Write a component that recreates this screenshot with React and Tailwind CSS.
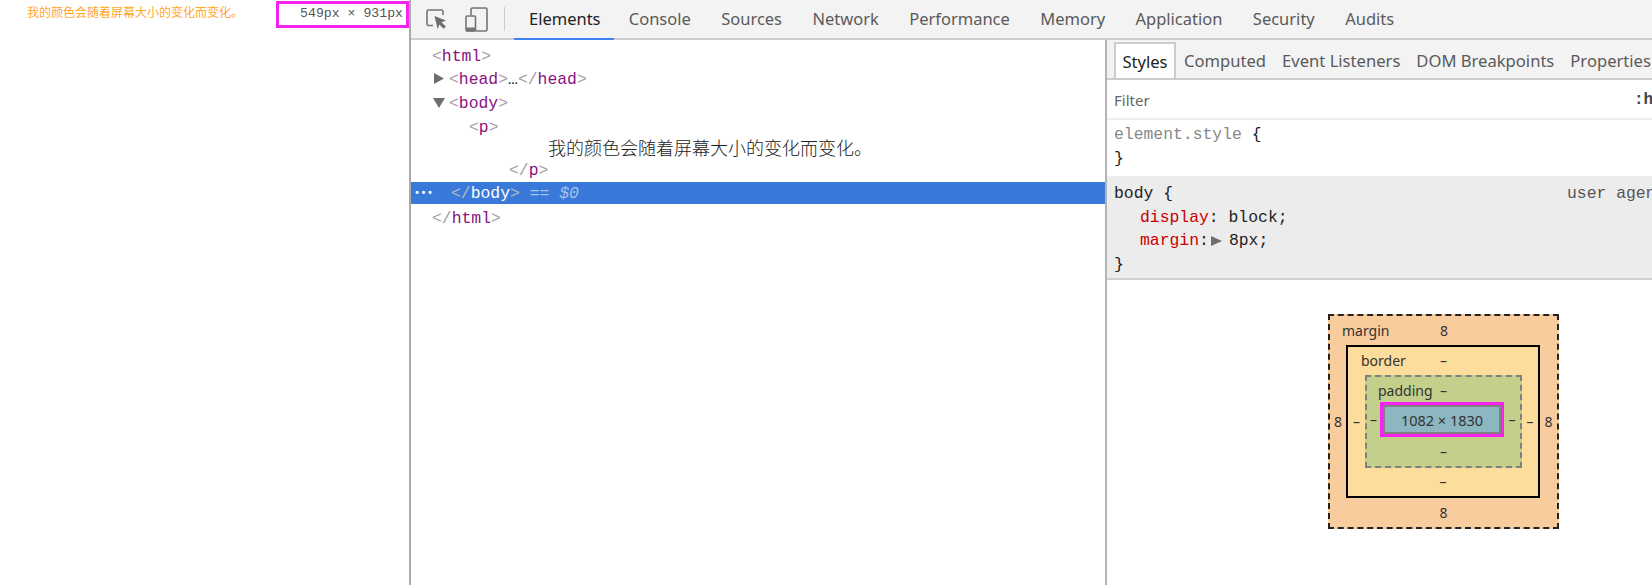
import React from 'react';

const uiFont = "font-['Noto_Sans','Open_Sans',sans-serif]";
const tabs = ['Console', 'Sources', 'Network', 'Performance', 'Memory', 'Application', 'Security', 'Audits'];
const subTabs = ['Computed', 'Event Listeners', 'DOM Breakpoints', 'Properties'];

const Tag = ({ children }) => (
  <>
    <span className="text-[#a89ba8]">&lt;</span>
    <span className="text-[#881280]">{children}</span>
    <span className="text-[#a89ba8]">&gt;</span>
  </>
);

const CloseTag = ({ children }) => (
  <>
    <span className="text-[#a89ba8]">&lt;/</span>
    <span className="text-[#881280]">{children}</span>
    <span className="text-[#a89ba8]">&gt;</span>
  </>
);

const Arrow = ({ down }) => (
  <svg width="12" height="12" viewBox="0 0 12 12" className="shrink-0 mr-[4px] -ml-[1px] -mt-[1px]">
    <path d={down ? 'M0 1h12L6 11z' : 'M1 0l10 5.5L1 11z'} fill="#6e6e6e" />
  </svg>
);

const BoxLabel = ({ children, className = '' }) => (
  <span className={`text-[14px] leading-[18px] text-[#333] ${className}`}>{children}</span>
);

const App = () => {
  return (
    <div className="flex w-[1652px] h-[585px] overflow-hidden bg-white font-['Liberation_Mono',monospace]">
      {/* page preview */}
      <div className="w-[409px] shrink-0 flex justify-between items-start pt-[1px]">
        <p className="pl-[27px] pt-[2px] text-[12px] leading-[18px] text-[#ffa726] font-['Noto_Sans_CJK_SC',sans-serif]">
          我的颜色会随着屏幕大小的变化而变化。
        </p>
        <div className="w-[133px] h-[27px] border-[3px] border-[#f622f0] text-right pr-[3px] text-[13.2px] leading-[20px] text-[#555]">
          549px × 931px
        </div>
      </div>

      {/* devtools */}
      <div className="flex-1 flex flex-col border-l-2 border-[#aaaaaa] min-w-0">
        <div className={`h-[40px] shrink-0 flex items-stretch bg-[#f3f3f3] border-b-2 border-[#cccccc] whitespace-nowrap ${uiFont}`}>
          <div className="pl-[15px] flex items-center">
            <svg width="21" height="20" viewBox="0 0 21 20" fill="none">
              <path d="M7 16.5H2.5a1.5 1.5 0 0 1-1.5-1.5V2.5A1.5 1.5 0 0 1 2.5 1h13A1.5 1.5 0 0 1 17 2.5V6" stroke="#757575" strokeWidth="1.6" />
              <path d="M8.5 7l11.5 4.6-4.4 1.7 4.2 4.3-2.2 2.2-4.2-4.3-1.8 4.4z" fill="#6e6e6e" />
            </svg>
          </div>
          <div className="pl-[18px] flex items-center">
            <svg width="23" height="25" viewBox="0 0 23 25" fill="none">
              <path d="M6 8V2.5A1.5 1.5 0 0 1 7.5 1h13A1.5 1.5 0 0 1 22 2.5v20a1.5 1.5 0 0 1-1.5 1.5H11" stroke="#757575" strokeWidth="1.6" />
              <rect x="1" y="9" width="9.5" height="15" rx="1.2" stroke="#757575" strokeWidth="1.6" />
              <rect x="1" y="20.5" width="9.5" height="4" fill="#757575" />
            </svg>
          </div>
          <div className="w-px h-[24px] self-center bg-[#cccccc] ml-[16px] mr-[9px]" />
          <div className="relative pl-[15px] pr-[13px] flex items-center text-[16.5px] text-[#222]">
            Elements
            <div className="absolute left-0 right-0 -bottom-[2px] h-[2px] bg-[#3f82f1]" />
          </div>
          {tabs.map((t) => (
            <div key={t} className="px-[15.2px] flex items-center text-[16.5px] text-[#5a5a5a]">{t}</div>
          ))}
        </div>

        <div className="flex-1 flex min-h-0">
          {/* elements tree */}
          <div className="w-[694px] shrink-0 pt-[5px] text-[16.4px] text-[#222]">
            <div className="h-[23.5px] leading-[23.5px] pl-[21px]"><Tag>html</Tag></div>
            <div className="h-[22.5px] leading-[22.5px] pl-[23px] flex items-center"><Arrow /><span><Tag>head</Tag>…<CloseTag>head</CloseTag></span></div>
            <div className="h-[24.5px] leading-[23.5px] pl-[23px] flex items-center"><Arrow down /><span><Tag>body</Tag></span></div>
            <div className="h-[22.5px] leading-[24.5px] pl-[58px]"><Tag>p</Tag></div>
            <div className="h-[22px] leading-[18px] pl-[137px] font-['Noto_Sans_CJK_SC',sans-serif] text-[18px] font-light">我的颜色会随着屏幕大小的变化而变化。</div>
            <div className="h-[22px] leading-[22px] pl-[98px]"><CloseTag>p</CloseTag></div>
            <div className="relative h-[22px] leading-[24px] pl-[40px] bg-[#3879d9] text-white">
              <span className="absolute left-[3px] top-0 font-bold text-[10px] tracking-[0.5px]">•••</span>
              <span className="text-[#bbbbbb]">&lt;/</span>body<span className="text-[#bbbbbb]">&gt;</span>
              <span className="text-[#a8c4ec] italic"> == $0</span>
            </div>
            <div className="h-[23px] leading-[29px] pl-[21px]"><CloseTag>html</CloseTag></div>
          </div>

          {/* sidebar */}
          <div className="flex-1 flex flex-col min-w-0 border-l-2 border-[#b4b4b4]">
            <div className={`h-[40px] shrink-0 flex items-end pl-[7px] bg-[#f3f3f3] border-b-2 border-[#cccccc] overflow-hidden whitespace-nowrap ${uiFont}`}>
              <div className="h-[36px] w-[62px] shrink-0 justify-center flex items-center bg-white border-2 border-b-0 border-[#cccccc] text-[16.6px] text-[#222] pt-[2px]">Styles</div>
              <div className="flex h-[36px] items-center pt-[2px]">
                {subTabs.map((t) => (
                  <div key={t} className="px-[8px] text-[16.6px] text-[#5a5a5a]">{t}</div>
                ))}
              </div>
            </div>
            <div className={`h-[40px] shrink-0 flex items-center justify-between pl-[7px] pt-[2px] border-b-2 border-[#eeeeee] overflow-hidden ${uiFont}`}>
              <span className="text-[15px] text-[#666]">Filter</span>
              <span className="text-[16px] text-[#444] font-bold font-['Liberation_Mono',monospace] w-[18px] whitespace-nowrap">:h</span>
            </div>
            <div className="h-[56px] pl-[7px] pt-[3px] text-[16.4px] leading-[24.2px] text-[#222]">
              <div><span className="text-[#888]">element.style</span> {'{'}</div>
              <div>{'}'}</div>
            </div>
            <div className="relative pl-[7px] pt-[6px] h-[104px] text-[16.4px] leading-[23.6px] text-[#222] bg-[#ececec] border-b-2 border-[#d0d0d0] whitespace-nowrap overflow-hidden">
              <div>body {'{'}</div>
              <div className="pl-[26px]"><span className="text-[#c80000]">display</span>: block;</div>
              <div className="pl-[26px] flex items-center"><span className="text-[#c80000]">margin</span>:<svg width="11" height="12" viewBox="0 0 11 12" className="ml-[2px] mr-[7px]"><path d="M0 1l11 5-11 5z" fill="#6e6e6e" /></svg>8px;</div>
              <div>{'}'}</div>
              <span className="absolute left-[460px] top-[6px] text-[#555]">user agent</span>
            </div>

            {/* box model */}
            <div className={`flex-1 pt-[34px] pl-[221px] ${uiFont}`}>
              <div className="w-[231px] h-[215px] border-2 border-dashed border-[#222] bg-[#f9cc9d] flex flex-col">
                <div className="h-[29px] pl-[12px] flex items-center"><BoxLabel className="w-[98px]">margin</BoxLabel><BoxLabel>8</BoxLabel></div>
                <div className="flex items-center">
                  <BoxLabel className="w-[16px] text-center">8</BoxLabel>
                  <div className="w-[194px] h-[153px] border-2 border-black bg-[#fddd9b] flex flex-col">
                    <div className="h-[28px] pl-[13px] flex items-center"><BoxLabel className="w-[79px]">border</BoxLabel><BoxLabel>–</BoxLabel></div>
                    <div className="flex items-center">
                      <BoxLabel className="w-[17px] text-center">–</BoxLabel>
                      <div className="w-[157px] h-[93px] border-2 border-dashed border-[#808080] bg-[#c3d08b] flex flex-col">
                        <div className="h-[25px] pl-[11px] pt-[3px] flex items-center"><BoxLabel className="w-[62px]">padding</BoxLabel><BoxLabel>–</BoxLabel></div>
                        <div className="flex items-center">
                          <BoxLabel className="w-[13px] text-center">–</BoxLabel>
                          <div className="w-[124px] h-[35px] border-[3px] border-[#f622f0] bg-[#8cb6c0]">
                            <div className="h-full border-2 border-[#808080] flex items-center justify-center text-[14.5px] leading-[18px] text-[#333]">
                              1082 × 1830
                            </div>
                          </div>
                          <BoxLabel className="w-[16px] text-center">–</BoxLabel>
                        </div>
                        <div className="flex-1 flex items-center justify-center"><BoxLabel>–</BoxLabel></div>
                      </div>
                      <BoxLabel className="w-[16px] text-center">–</BoxLabel>
                    </div>
                    <div className="flex-1 flex items-center justify-center"><BoxLabel>–</BoxLabel></div>
                  </div>
                  <BoxLabel className="w-[17px] text-center">8</BoxLabel>
                </div>
                <div className="flex-1 flex items-center justify-center"><BoxLabel>8</BoxLabel></div>
              </div>
            </div>
          </div>
        </div>
      </div>
    </div>
  );
};

export default App;
